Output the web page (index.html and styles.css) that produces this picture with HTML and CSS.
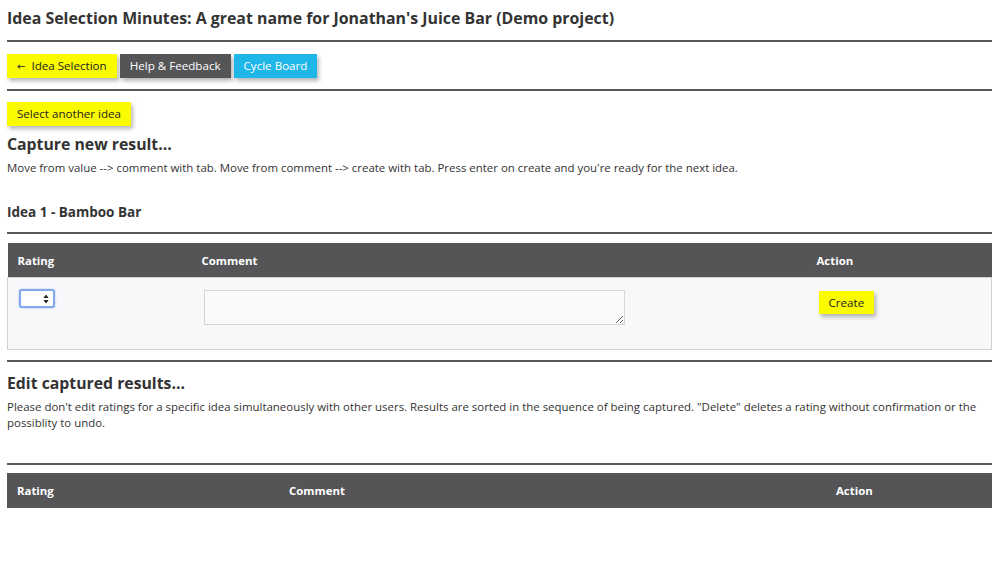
FILE: index.html
```html
<!DOCTYPE html>
<html>
<head>
<meta charset="utf-8">
<link rel="stylesheet" href="styles.css">
</head>
<body>
<div class="page">
  <h1 class="title">Idea Selection Minutes: A great name for Jonathan's Juice Bar (Demo project)</h1>
  <hr class="rule">
  <nav class="nav">
    <a class="btn btn-yellow"><span class="arrow">&larr;</span> Idea Selection</a>
    <a class="btn btn-dark">Help &amp; Feedback</a>
    <a class="btn btn-cyan">Cycle Board</a>
  </nav>
  <hr class="rule">
  <div class="select-row"><a class="btn btn-yellow">Select another idea</a></div>
  <h2 class="h2 h2-capture">Capture new result...</h2>
  <p class="text">Move from value --&gt; comment with tab. Move from comment --&gt; create with tab. Press enter on create and you're ready for the next idea.</p>
  <h3 class="h3">Idea 1 - Bamboo Bar</h3>
  <hr class="rule rule-idea">
  <table class="tbl tbl-new">
    <thead>
      <tr><th class="c1">Rating</th><th class="c2">Comment</th><th class="c3">Action</th></tr>
    </thead>
    <tbody>
      <tr>
        <td class="c1"><span class="sel"><select class="select"><option></option></select><svg class="sel-arrow" width="6" height="10" viewBox="0 0 6 10"><path d="M3 0.5 L5.6 4 L0.4 4 Z M3 9.5 L5.6 6 L0.4 6 Z" fill="#222"/></svg></span></td>
        <td class="c2"><textarea class="area"></textarea></td>
        <td class="c3"><a class="btn btn-yellow btn-create">Create</a></td>
      </tr>
    </tbody>
  </table>
  <hr class="rule rule-edit">
  <h2 class="h2 h2-edit">Edit captured results...</h2>
  <p class="text">Please don't edit ratings for a specific idea simultaneously with other users. Results are sorted in the sequence of being captured. "Delete" deletes a rating without confirmation or the possiblity to undo.</p>
  <hr class="rule rule-list">
  <table class="tbl tbl-list">
    <thead>
      <tr><th class="d1">Rating</th><th class="d2">Comment</th><th class="d3">Action</th></tr>
    </thead>
  </table>
</div>
</body>
</html>
```
FILE: styles.css
```css
html, body {
  margin: 0;
  padding: 0;
  background: #ffffff;
}
body {
  font-family: "Open Sans", "Noto Sans", sans-serif;
  color: #333333;
}
.page {
  padding: 0 8px 0 7px;
}
.title {
  margin: 0;
  padding-top: 7px;
  font-size: 15.9px;
  line-height: 22px;
  font-weight: 700;
  color: #333;
}
.rule {
  border: 0;
  height: 2px;
  background: #58585a;
  margin: 11px 0 0 0;
}
.nav {
  display: flex;
  gap: 3px;
  margin-top: 12px;
}
.btn {
  display: inline-block;
  height: 24px;
  line-height: 24px;
  padding: 0 10px;
  font-size: 11.6px;
  box-shadow: 2px 3px 4px rgba(0,0,0,0.28);
  text-decoration: none;
  cursor: pointer;
}
.arrow {
  font-family: "DejaVu Sans", sans-serif;
  font-size: 10px;
  margin-right: 3px;
}
.btn-yellow { background: #fbfb00; color: #222; }
.btn-dark { background: #555558; color: #fff; }
.btn-cyan { background: #1fb6e8; color: #fff; }
.nav + .rule { margin-top: 11px; }
.select-row {
  margin-top: 10px;
}
.h2 {
  margin: 0;
  font-size: 15.8px;
  line-height: 22px;
  font-weight: 700;
  color: #333;
}
.h2-capture { margin-top: 7px; }
.text {
  margin: 5px 0 0 0;
  font-size: 11.45px;
  line-height: 16px;
}
.h3 {
  margin: 27px 0 0 0;
  font-size: 13.5px;
  line-height: 18px;
  font-weight: 700;
}
.rule-idea { margin-top: 11px; }
.tbl {
  width: 100%;
  border-collapse: collapse;
  margin-top: 9px;
}
.tbl th {
  background: #555558;
  color: #fff;
  font-size: 11.4px;
  font-weight: 700;
  text-align: left;
  height: 34px;
  padding: 0 10px;
}
.tbl-new tbody td {
  background: #f8f8fa;
  vertical-align: top;
  height: 72px;
  padding: 12px 10px 0 10px;
  box-sizing: border-box;
}
.tbl-new tbody tr {
  border: 1px solid #d0d0d2;
}
.c1 { width: 164px; }
.c2 { width: 595px; }
.c3 { width: auto; }
.d1 { width: 252px; }
.d2 { width: 527px; }
.d3 { width: auto; }
.sel {
  position: relative;
  display: block;
  width: 36px;
  margin-left: 1px;
  margin-top: -1px;
}
.select {
  -webkit-appearance: none;
  appearance: none;
  width: 36px;
  height: 19px;
  border: 2px solid #7fa9ec;
  border-radius: 3px;
  background: #fff;
  box-shadow: 0 0 2px rgba(80,140,230,0.6);
  margin: 0;
  display: block;
}
.sel-arrow {
  position: absolute;
  right: 6px;
  top: 5px;
}
.area {
  display: block;
  width: 421px;
  height: 35px;
  margin: 0 0 0 2px;
  box-sizing: border-box;
  border: 1px solid #d6d6d8;
  background: #fafafc;
  resize: both;
}
.btn-create {
  height: 23px;
  line-height: 23px;
  margin-top: 1px;
  margin-left: 2px;
}
.rule-edit { margin-top: 10px; }
.h2-edit { margin-top: 10px; }
.text + .rule-list { margin-top: 32px; }
.tbl-list { margin-top: 8px; }
.tbl-list th { height: 35px; }
```
